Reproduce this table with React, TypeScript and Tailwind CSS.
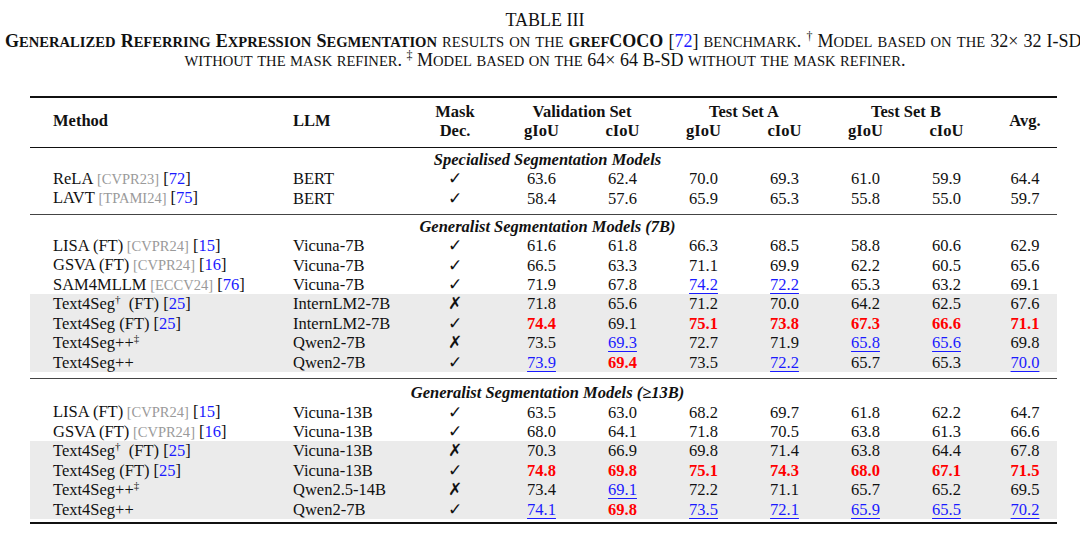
import React from "react";

type Cell = { v: string; s?: "r" | "b" };
type Row = {
  name: string;
  sup?: string;
  after?: string;
  venue?: string;
  cite?: string;
  llm: string;
  mask: boolean;
  vals: Cell[];
  shade?: boolean;
};

const c = (spec: string): Cell[] =>
  spec.split(" ").map((t) => {
    if (t.endsWith("r")) return { v: t.slice(0, -1), s: "r" };
    if (t.endsWith("b")) return { v: t.slice(0, -1), s: "b" };
    return { v: t };
  });

const sections: { title: React.ReactNode; rows: Row[] }[] = [
  {
    title: "Specialised Segmentation Models",
    rows: [
      { name: "ReLA", venue: "CVPR23", cite: "72", llm: "BERT", mask: true, vals: c("63.6 62.4 70.0 69.3 61.0 59.9 64.4") },
      { name: "LAVT", venue: "TPAMI24", cite: "75", llm: "BERT", mask: true, vals: c("58.4 57.6 65.9 65.3 55.8 55.0 59.7") },
    ],
  },
  {
    title: "Generalist Segmentation Models (7B)",
    rows: [
      { name: "LISA", after: " (FT)", venue: "CVPR24", cite: "15", llm: "Vicuna-7B", mask: true, vals: c("61.6 61.8 66.3 68.5 58.8 60.6 62.9") },
      { name: "GSVA", after: " (FT)", venue: "CVPR24", cite: "16", llm: "Vicuna-7B", mask: true, vals: c("66.5 63.3 71.1 69.9 62.2 60.5 65.6") },
      { name: "SAM4MLLM", venue: "ECCV24", cite: "76", llm: "Vicuna-7B", mask: true, vals: c("71.9 67.8 74.2b 72.2b 65.3 63.2 69.1") },
      { name: "Text4Seg", sup: "†", after: "  (FT)", cite: "25", llm: "InternLM2-7B", mask: false, shade: true, vals: c("71.8 65.6 71.2 70.0 64.2 62.5 67.6") },
      { name: "Text4Seg", after: " (FT)", cite: "25", llm: "InternLM2-7B", mask: true, shade: true, vals: c("74.4r 69.1 75.1r 73.8r 67.3r 66.6r 71.1r") },
      { name: "Text4Seg++", sup: "‡", llm: "Qwen2-7B", mask: false, shade: true, vals: c("73.5 69.3b 72.7 71.9 65.8b 65.6b 69.8") },
      { name: "Text4Seg++", llm: "Qwen2-7B", mask: true, shade: true, vals: c("73.9b 69.4r 73.5 72.2b 65.7 65.3 70.0b") },
    ],
  },
  {
    title: (
      <>
        Generalist Segmentation Models (<span className="not-italic">≥</span>13B)
      </>
    ),
    rows: [
      { name: "LISA", after: " (FT)", venue: "CVPR24", cite: "15", llm: "Vicuna-13B", mask: true, vals: c("63.5 63.0 68.2 69.7 61.8 62.2 64.7") },
      { name: "GSVA", after: " (FT)", venue: "CVPR24", cite: "16", llm: "Vicuna-13B", mask: true, vals: c("68.0 64.1 71.8 70.5 63.8 61.3 66.6") },
      { name: "Text4Seg", sup: "†", after: "  (FT)", cite: "25", llm: "Vicuna-13B", mask: false, shade: true, vals: c("70.3 66.9 69.8 71.4 63.8 64.4 67.8") },
      { name: "Text4Seg", after: " (FT)", cite: "25", llm: "Vicuna-13B", mask: true, shade: true, vals: c("74.8r 69.8r 75.1r 74.3r 68.0r 67.1r 71.5r") },
      { name: "Text4Seg++", sup: "‡", llm: "Qwen2.5-14B", mask: false, shade: true, vals: c("73.4 69.1b 72.2 71.1 65.7 65.2 69.5") },
      { name: "Text4Seg++", llm: "Qwen2-7B", mask: true, shade: true, vals: c("74.1b 69.8r 73.5b 72.1b 65.9b 65.5b 70.2b") },
    ],
  },
];

const grid =
  "grid grid-cols-[260px_121px_90px_81px_81px_81px_81px_81px_81px_70px]";

// fake small caps: lowercase runs are upper-cased at a smaller size
function SC({ t }: { t: string }) {
  return (
    <>
      {t.split(/([a-z]+)/).map((p, i) =>
        /^[a-z]+$/.test(p) ? (
          <span key={i} className="text-[14.6px] uppercase">
            {p}
          </span>
        ) : (
          <React.Fragment key={i}>{p}</React.Fragment>
        ),
      )}
    </>
  );
}

function Num({ cell }: { cell: Cell }) {
  if (cell.s === "r") return <span className="font-bold text-[#ff0000]">{cell.v}</span>;
  if (cell.s === "b")
    return (
      <span className="text-[#1a1aff] underline decoration-[#1a1aff] decoration-1 underline-offset-[3px]">
        {cell.v}
      </span>
    );
  return <span>{cell.v}</span>;
}

function Method({ r }: { r: Row }) {
  return (
    <span className="whitespace-pre">
      {r.name}
      {r.sup && <sup className="-top-[6px] text-[11px] leading-none">{r.sup}</sup>}
      {r.after}
      {r.venue && <span className="text-[14.5px] text-[#9a9a9a]"> [{r.venue}]</span>}
      {r.cite && (
        <>
          {" "}[<span className="text-[#1a1aff]">{r.cite}</span>]
        </>
      )}
    </span>
  );
}

function DataRow({ r }: { r: Row }) {
  return (
    <div className={`${grid} h-[19.5px] items-center leading-[19.5px] ${r.shade ? "bg-[#ebebeb]" : ""}`}>
      <div className="pl-[23px]">
        <Method r={r} />
      </div>
      <div className="pl-[3px]">{r.llm}</div>
      <div className="pr-[2px] text-center font-['DejaVu_Sans',sans-serif] text-[17px] font-bold">
        {r.mask ? "✓" : "✗"}
      </div>
      {r.vals.map((v, i) => (
        <div key={i} className={`text-center ${i === 6 ? "pl-[6px]" : ""}`}>
          <Num cell={v} />
        </div>
      ))}
    </div>
  );
}

function Title({ children }: { children: React.ReactNode }) {
  return <div className="h-[18px] pl-[8px] text-center font-bold italic leading-[18px]">{children}</div>;
}

export default function App() {
  return (
    <div className="h-[536px] w-[1080px] overflow-hidden bg-white font-['Liberation_Serif',serif] text-[16.5px] text-[#111]">
      <div className="pt-[11px] text-[18px] leading-[19px]">
        <div className="h-[19px] pl-[10px] text-center">TABLE III</div>
        <div className="mt-[2px] h-[19px] whitespace-nowrap pl-[5px] [word-spacing:0.6px]">
          <span className="font-bold">
            <SC t="Generalized Referring Expression Segmentation" />
          </span>{" "}
          <SC t="results on the" />{" "}
          <span className="font-bold">
            <SC t="grefCOCO" />
          </span>{" "}
          [<span className="text-[#1a1aff]">72</span>] <SC t="benchmark." />{" "}
          <sup className="-top-[7px] text-[12px] leading-none">†</sup>{" "}
          <SC t="Model based on the 32× 32 I-SD" />
        </div>
        <div className="h-[19px] pl-[10px] text-center">
          <SC t="without the mask refiner." /> <sup className="-top-[7px] text-[12px] leading-none">‡</sup>{" "}
          <SC t="Model based on the 64× 64 B-SD without the mask refiner." />
        </div>
      </div>

      <div className="ml-[30px] mt-[26px] w-[1027px] border-t-2 border-[#111]">
        <div className={`${grid} border-b-[1.5px] border-[#111] pb-[7px] pt-[3.5px] font-bold leading-[19px]`}>
          <div className="row-span-2 self-center pl-[23px]">Method</div>
          <div className="row-span-2 self-center pl-[3px]">LLM</div>
          <div className="row-span-2 pr-[2px] text-center">
            Mask
            <br />
            Dec.
          </div>
          <div className="col-span-2 text-center">Validation Set</div>
          <div className="col-span-2 text-center">Test Set A</div>
          <div className="col-span-2 text-center">Test Set B</div>
          <div className="row-span-2 self-center pl-[6px] text-center">Avg.</div>
          {["gIoU", "cIoU", "gIoU", "cIoU", "gIoU", "cIoU"].map((h, i) => (
            <div key={i} className="text-center">
              {h}
            </div>
          ))}
        </div>

        <div className="border-b-[1.5px] border-[#444] pb-[6px] pt-[3px]">
          <Title>{sections[0].title}</Title>
          {sections[0].rows.map((r, ri) => (
            <DataRow key={ri} r={r} />
          ))}
        </div>
        <div className="border-b-[1.5px] border-[#444] pb-[6px] pt-[3px]">
          <Title>{sections[1].title}</Title>
          {sections[1].rows.map((r, ri) => (
            <DataRow key={ri} r={r} />
          ))}
        </div>
        <div className="border-b-2 border-[#111] pb-[3px] pt-[5px]">
          <Title>{sections[2].title}</Title>
          {sections[2].rows.map((r, ri) => (
            <DataRow key={ri} r={r} />
          ))}
        </div>
      </div>
    </div>
  );
}
